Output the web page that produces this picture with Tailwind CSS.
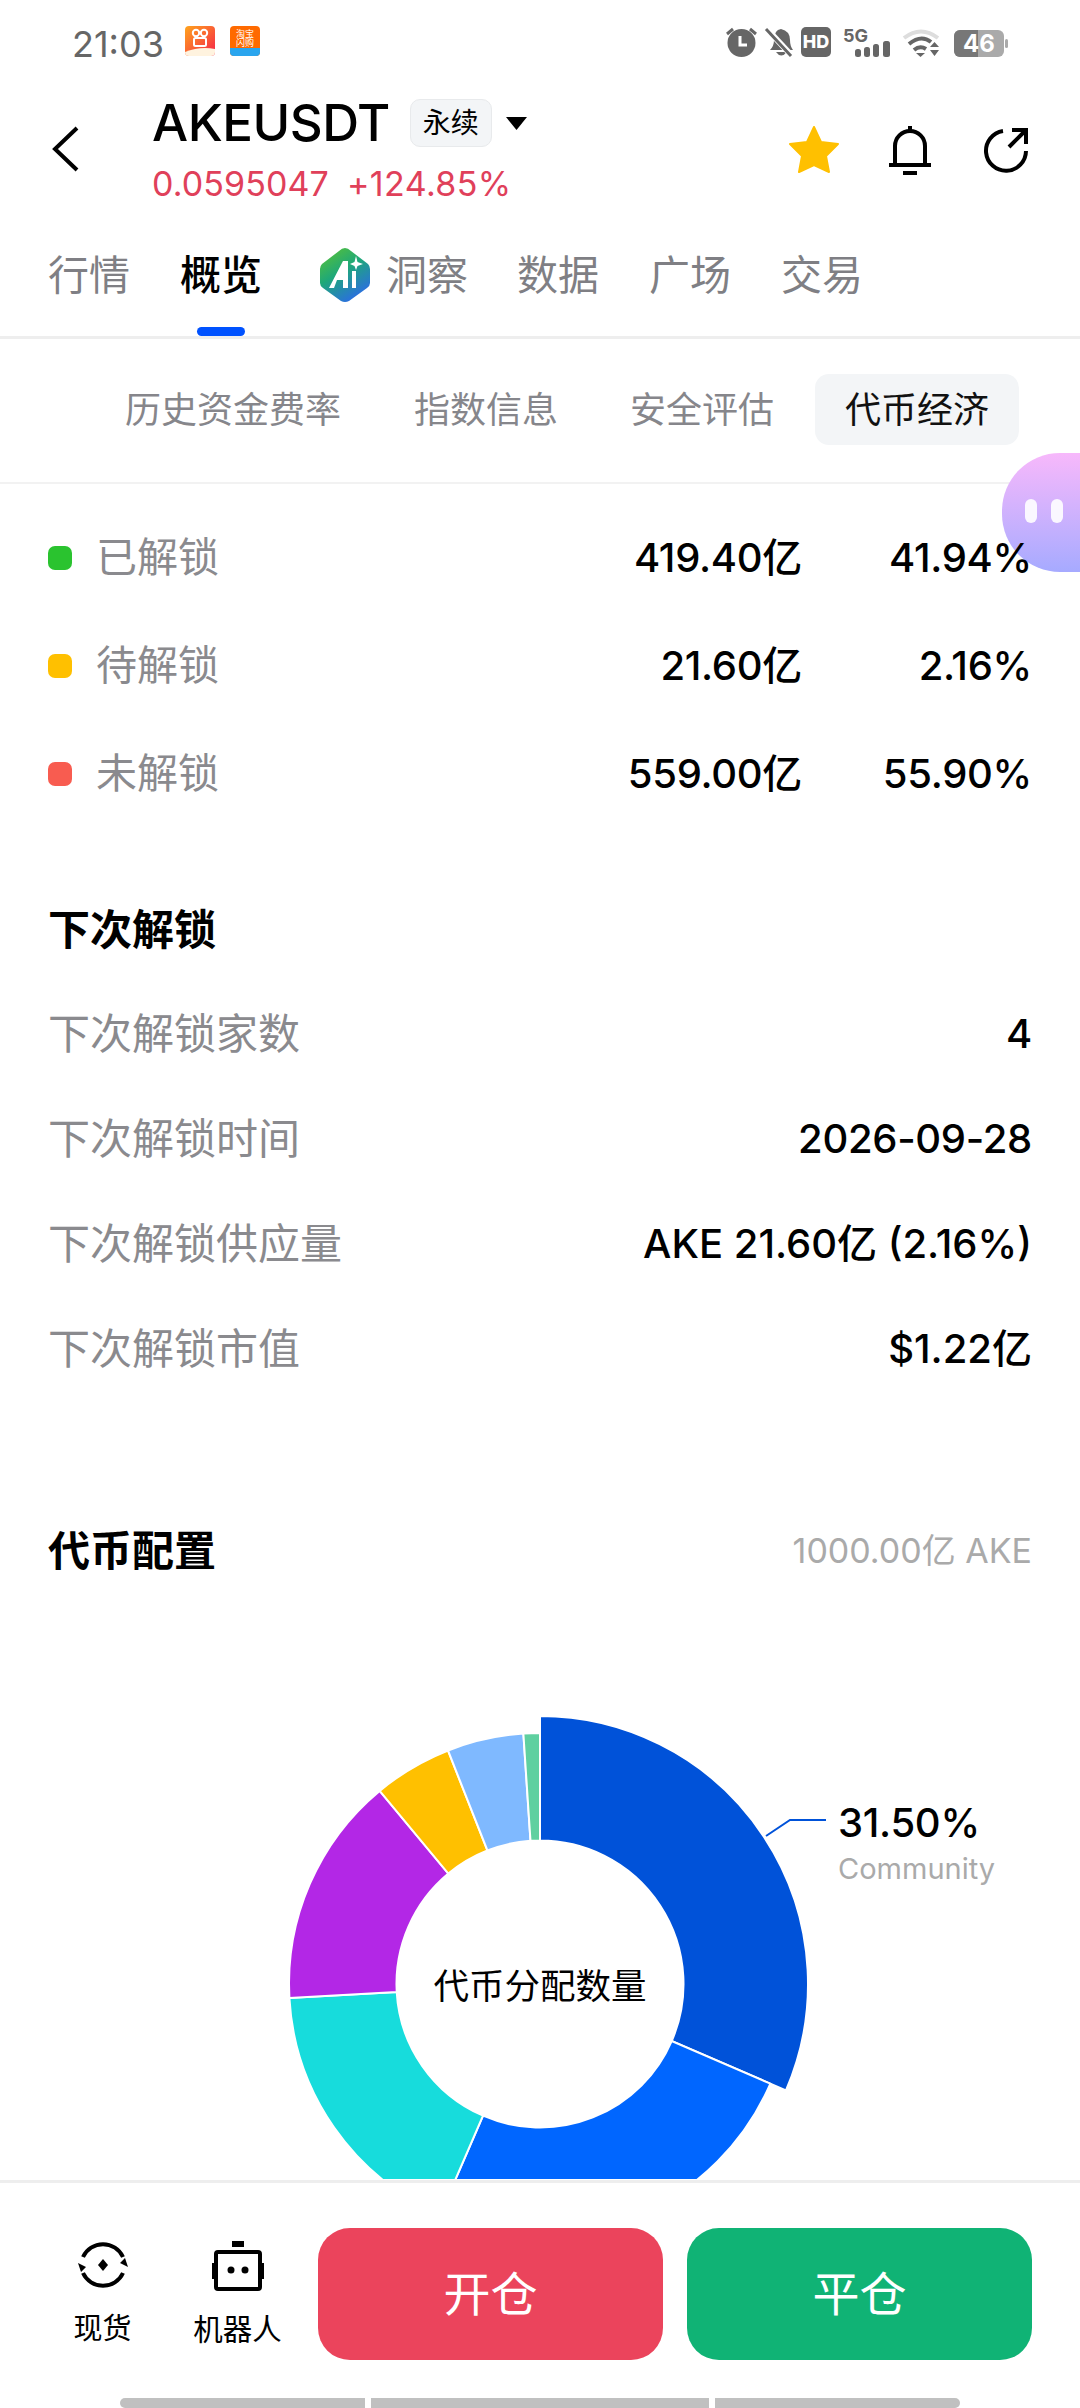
<!DOCTYPE html>
<html lang="zh-CN">
<head>
<meta charset="utf-8">
<title>AKEUSDT</title>
<script src="https://cdn.jsdelivr.net/npm/@tailwindcss/browser@4"></script>
</head>
<body class="bg-white">
<div class="relative w-[1080px] h-[2408px] overflow-hidden flex flex-col bg-white text-black font-['Inter','Noto_Sans_CJK_SC',sans-serif]">

  <!-- status bar -->
  <div class="h-[76px] flex items-start pl-[72px] pr-[60px] shrink-0">
    <span class="mt-[22px] text-[36px] leading-[44px] text-[#666]">21:03</span>
    <svg class="ml-[21px] mt-[26px]" width="88" height="32" viewBox="0 0 88 32">
      <defs>
        <linearGradient id="ks" x1="0" y1="0" x2="1" y2="1"><stop offset="0" stop-color="#ffa41c"/><stop offset="1" stop-color="#f5224a"/></linearGradient>
      </defs>
      <rect x="0" y="0" width="30" height="30" rx="4" fill="url(#ks)"/>
      <path d="M0 26 Q15 20 30 23 V26 a4 4 0 0 1 -4 4 H4 a4 4 0 0 1 -4 -4Z" fill="#fff3df"/>
      <circle cx="11" cy="7" r="3.2" fill="none" stroke="#fff" stroke-width="2"/>
      <circle cx="19" cy="7" r="3.2" fill="none" stroke="#fff" stroke-width="2"/>
      <rect x="9" y="12" width="12" height="8" rx="1.5" fill="none" stroke="#fff" stroke-width="2"/>
      <rect x="45" y="0" width="30" height="30" rx="4" fill="#ff6a00"/>
      <path d="M45 22 H75 V26 a4 4 0 0 1 -4 4 H49 a4 4 0 0 1 -4 -4Z" fill="#2aa5ee"/>
      <text x="60" y="11" text-anchor="middle" font-size="9" fill="#fff">淘宝</text>
      <text x="60" y="20" text-anchor="middle" font-size="9" fill="#fff">闪购</text>
    </svg>
    <svg class="ml-auto mt-[20px]" width="300" height="45" viewBox="720 20 300 45">
      <circle cx="741.500" cy="43" r="14" fill="#666"/>
      <path d="M740 36 V45 H747" fill="none" stroke="#fff" stroke-width="3"/>
      <path d="M727 34 L733 29 M750 29 L756 34" stroke="#666" stroke-width="3"/>
      <path d="M770 50 Q774 46 774 40 Q774 30 781 29 Q790 31 790 40 Q790 46 793 50 Z M776 52 Q781 59 787 52 Z" fill="#666"/>
      <path d="M766 28 L792 56" stroke="#fff" stroke-width="6"/>
      <path d="M766 29 L791 56" stroke="#666" stroke-width="3"/>
      <rect x="801" y="27" width="30" height="30" rx="5" fill="#666"/>
      <text x="816" y="48" text-anchor="middle" font-size="18" font-weight="800" fill="#fff">HD</text>
      <text x="843" y="42" font-size="18" font-weight="700" fill="#666">5G</text>
      <rect x="855" y="49" width="6" height="8" rx="2.500" fill="#666"/>
      <rect x="864" y="47" width="6" height="10" rx="2.500" fill="#666"/>
      <rect x="873" y="44" width="6" height="13" rx="2.500" fill="#666"/>
      <rect x="883" y="41" width="7" height="16" rx="2.500" fill="#666"/>
      <path d="M904 38 Q921 25 938 38" fill="none" stroke="#ddd" stroke-width="4"/>
      <path d="M909 44 Q921 34 931 42" fill="none" stroke="#666" stroke-width="4"/>
      <path d="M914 50 Q920 45 926 49" fill="none" stroke="#666" stroke-width="4"/>
      <path d="M916 53 H925 L920.500 57Z M930 47 L934.500 42 L939 47Z M930 50 H939 L934.500 56Z" fill="#666"/>
      <rect x="954" y="30" width="50" height="27" rx="6" fill="#aaa"/>
      <path d="M960 30 H978 V57 H960 a6 6 0 0 1 -6 -6 V36 a6 6 0 0 1 6 -6Z" fill="#777"/>
      <rect x="1005" y="39" width="3" height="9" rx="1.500" fill="#aaa"/>
      <text x="979" y="52" text-anchor="middle" font-size="24" font-weight="700" fill="#fff">46</text>
    </svg>
  </div>

  <!-- header -->
  <div class="h-[156px] flex items-start pl-[52px] pr-[50px] shrink-0">
    <svg class="mt-[50px]" width="28" height="46" viewBox="0 0 28 46"><path d="M25 2 L3 23 L25 44" fill="none" stroke="#000" stroke-width="4"/></svg>
    <div class="ml-[72px] flex flex-col">
      <div class="flex items-center h-[58px] mt-[18px]">
        <span class="text-[51px] leading-[58px] font-medium tracking-[-0.5px]">AKEUSDT</span>
        <span class="ml-[20px] w-[82px] h-[48px] flex items-center justify-center rounded-[10px] bg-[#f3f5f7] border border-[#e8eaec] text-[28px]">永续</span>
        <svg class="ml-[14px]" width="21" height="13" viewBox="0 0 21 13"><path d="M0 0 H21 L10.500 13Z" fill="#000"/></svg>
      </div>
      <div class="flex mt-[12px] text-[34px] leading-[40px] text-[#e0405a]">
        <span class="tracking-[0.1px]">0.0595047</span>
        <span class="ml-[18px] tracking-[0.4px]">+124.85%</span>
      </div>
    </div>
    <div class="ml-auto flex items-center mt-[49px]">
      <svg width="50" height="48" viewBox="0 0 50 48"><path d="M25 1 L32 16 L49 18 L37 30 L40 46 L25 39 L10 46 L13 30 L1 18 L18 16Z" fill="#ffc000" stroke="#ffc000" stroke-width="2" stroke-linejoin="round"/></svg>
      <svg class="ml-[49px]" width="44" height="50" viewBox="0 0 44 50">
        <path d="M22 1 V6" stroke="#000" stroke-width="4"/>
        <path d="M7 40 V21 A15 15 0 0 1 37 21 V40" fill="none" stroke="#000" stroke-width="4"/>
        <path d="M1 40 H43" stroke="#000" stroke-width="4"/>
        <path d="M15 48 H29" stroke="#000" stroke-width="4"/>
      </svg>
      <svg class="ml-[52px] -translate-x-[1px]" width="46" height="46" viewBox="0 0 46 46">
        <path d="M20 4 A20 20 0 1 0 43 24" fill="none" stroke="#000" stroke-width="4"/>
        <path d="M26 20 L42 4 M29 3 H43 V17" fill="none" stroke="#000" stroke-width="4"/>
      </svg>
    </div>
  </div>

  <!-- main tabs -->
  <div class="h-[107px] flex items-start pl-[48px] pt-[20px] border-b-[3px] border-[#eeeeee] shrink-0 text-[41px] leading-[46px] text-[#7f7f84]">
    <span>行情</span>
    <div class="ml-[50px] flex flex-col">
      <span class="text-black font-medium">概览</span>
      <span class="mt-[29px] self-center h-[9px] w-[48px] rounded-full bg-[#0052ff]"></span>
    </div>
    <div class="ml-[57px] flex items-center gap-[15px] h-[46px]">
      <svg width="52" height="56" viewBox="0 0 52 56">
        <defs>
          <linearGradient id="aiHex" x1="0" y1="0" x2="0.6" y2="1"><stop offset="0" stop-color="#5fc52e"/><stop offset="0.5" stop-color="#1fa878"/><stop offset="1" stop-color="#2a6fe0"/></linearGradient>
        </defs>
        <path d="M26 1 Q29 1 32 4 L49 17 Q51 19 51 22 V36 Q51 39 48 41 L30 54 Q26 56 22 54 L4 41 Q1 39 1 36 V22 Q1 19 3 17 L20 4 Q23 1 26 1Z" fill="url(#aiHex)"/>
        <path d="M10 41 L24 14 L29 14 L29 41 L24 41 L24 33 L18 33 L15 41Z" fill="#fff"/>
        <rect x="33" y="24" width="4" height="17" fill="#fff"/>
        <path d="M37 9 L38.500 15 L44 17 L38.500 19 L37 23 L35.500 19 L31 17 L35.500 15Z" fill="#fff"/>
      </svg>
      <span>洞察</span>
    </div>
    <span class="ml-[49px]">数据</span>
    <span class="ml-[50px]">广场</span>
    <span class="ml-[50px]">交易</span>
  </div>

  <!-- sub tabs -->
  <div class="h-[145px] flex items-start justify-end pt-[35px] pr-[61px] border-b-2 border-[#f2f2f2] shrink-0 text-[36px] text-[#86868b]">
    <span class="h-[71px] px-[30px] pt-[1px] flex items-center">历史资金费率</span>
    <span class="ml-[13px] h-[71px] px-[30px] pt-[1px] flex items-center">指数信息</span>
    <span class="ml-[12px] h-[71px] px-[30px] pt-[1px] flex items-center">安全评估</span>
    <span class="ml-[11px] h-[71px] px-[30px] pt-[1px] flex items-center rounded-[14px] bg-[#f3f5f7] text-[#111]">代币经济</span>
  </div>

  <main class="flex-1 overflow-hidden px-[48px]">
    <!-- unlock summary -->
    <div class="pt-[20px]">
      <div class="h-[108px] flex items-center">
        <span class="w-[24px] h-[24px] rounded-[7px] bg-[#2ac32f]"></span>
        <span class="ml-[24px] text-[41px] text-[#8a8a8e]">已解锁</span>
        <span class="relative z-10 ml-auto text-[40px] font-medium tracking-[-0.3px]">419.40亿</span>
        <span class="relative z-10 w-[230px] text-right text-[40px] font-medium tracking-[-0.3px]">41.94%</span>
      </div>
      <div class="h-[108px] flex items-center">
        <span class="w-[24px] h-[24px] rounded-[7px] bg-[#ffc000]"></span>
        <span class="ml-[24px] text-[41px] text-[#8a8a8e]">待解锁</span>
        <span class="ml-auto text-[40px] font-medium tracking-[-0.3px]">21.60亿</span>
        <span class="w-[230px] text-right text-[40px] font-medium tracking-[-0.3px]">2.16%</span>
      </div>
      <div class="h-[108px] flex items-center">
        <span class="w-[24px] h-[24px] rounded-[7px] bg-[#f85c50]"></span>
        <span class="ml-[24px] text-[41px] text-[#8a8a8e]">未解锁</span>
        <span class="ml-auto text-[40px] font-medium tracking-[-0.3px]">559.00亿</span>
        <span class="w-[230px] text-right text-[40px] font-medium tracking-[-0.3px]">55.90%</span>
      </div>
    </div>

    <!-- next unlock -->
    <div class="mt-[50px] h-[103px] flex items-center text-[42px] font-bold">下次解锁</div>
    <div class="h-[105px] flex items-center justify-between">
      <span class="text-[42px] text-[#8a8a8e]">下次解锁家数</span><span class="text-[40px] font-medium tracking-[-0.3px]">4</span>
    </div>
    <div class="h-[105px] flex items-center justify-between">
      <span class="text-[42px] text-[#8a8a8e]">下次解锁时间</span><span class="text-[40px] font-medium tracking-[-0.3px]">2026-09-28</span>
    </div>
    <div class="h-[105px] flex items-center justify-between">
      <span class="text-[42px] text-[#8a8a8e]">下次解锁供应量</span><span class="text-[40px] font-medium">AKE 21.60亿 (2.16%)</span>
    </div>
    <div class="h-[105px] flex items-center justify-between">
      <span class="text-[42px] text-[#8a8a8e]">下次解锁市值</span><span class="text-[40px] font-medium">$1.22亿</span>
    </div>

    <!-- allocation -->
    <div class="mt-[99px] h-[100px] flex items-center justify-between">
      <span class="text-[42px] font-bold">代币配置</span>
      <span class="text-[34px] text-[#aaaaaa]">1000.00亿 AKE</span>
    </div>
    <svg id="donut" class="-ml-[48px] block" width="1080" height="579" viewBox="0 1601 1080 579">
      <path d="M766 1837 L790 1821 H826" fill="none" stroke="#0052d9" stroke-width="2"/>
      <text x="838" y="1838" font-size="40" font-weight="500" letter-spacing="-0.3" fill="#000">31.50%</text>
      <text x="838" y="1880" font-size="29" fill="#aaaaaa">Community</text>
      <text x="540" y="2000" text-anchor="middle" font-size="35.500" fill="#000">代币分配数量</text>
    </svg>
  </main>

  <!-- bottom bar -->
  <div class="h-[228px] shrink-0 border-t-[3px] border-[#eeeeee] bg-white pt-[45px]">
    <div class="flex items-start pl-[74px]">
      <div class="w-[57px] flex flex-col items-center pt-[11px]">
        <svg width="52" height="52" viewBox="0 0 52 52">
          <path d="M6 18 A22 22 0 0 1 46 18 M46 34 A22 22 0 0 1 6 34" fill="none" stroke="#000" stroke-width="4"/>
          <path d="M1 24 L9 28 L4 33 Z M51 28 L43 24 L48 19Z" fill="#000"/>
          <path d="M26 20 L31 26 L26 32 L21 26Z" fill="#000"/>
        </svg>
        <span class="mt-[20px] text-[29px] leading-[36px] whitespace-nowrap">现货</span>
      </div>
      <div class="ml-[62px] w-[89px] flex flex-col items-center pt-[13px]">
        <svg width="52" height="50" viewBox="0 0 52 50">
          <rect x="20" y="0" width="12" height="6" fill="#000"/>
          <rect x="4" y="11" width="44" height="37" rx="2" fill="none" stroke="#000" stroke-width="4"/>
          <rect x="0" y="22" width="3" height="16" fill="#000"/>
          <rect x="49" y="22" width="3" height="16" fill="#000"/>
          <circle cx="19" cy="29" r="3.500" fill="#000"/>
          <circle cx="33" cy="29" r="3.500" fill="#000"/>
        </svg>
        <span class="mt-[20px] text-[29.500px] leading-[36px] whitespace-nowrap">机器人</span>
      </div>
      <button class="ml-[36px] w-[345px] h-[132px] rounded-[32px] bg-[#eb445c] text-white text-[47px]">开仓</button>
      <button class="ml-[24px] w-[345px] h-[132px] rounded-[32px] bg-[#10b375] text-white text-[47px]">平仓</button>
    </div>
    <div class="mt-[38px] flex justify-center gap-[6px]">
      <span class="w-[245px] h-[10px] rounded-l-full bg-[#c0c0c0]"></span>
      <span class="w-[338px] h-[10px] bg-[#c0c0c0]"></span>
      <span class="w-[245px] h-[10px] rounded-r-full bg-[#c0c0c0]"></span>
    </div>
  </div>

  <!-- floating assistant -->
  <div class="absolute left-[1002px] top-[453px] w-[120px] h-[119px] rounded-l-[58px] bg-gradient-to-b from-[#f7b8fb] to-[#a6aaff] flex gap-[14px] pt-[46px] pl-[23px]">
    <span class="w-[12px] h-[24px] rounded-full bg-white/90"></span>
    <span class="w-[12px] h-[24px] rounded-full bg-white/90"></span>
  </div>
</div>

<script>
  // Function to draw the allocation donut
  const segments = [
    { from: 0, to: 113.4, color: "#0052d9", outer: 268 },
    { from: 113.4, to: 203.4, color: "#0066ff", outer: 251 },
    { from: 203.4, to: 266.8, color: "#17dcdc", outer: 251 },
    { from: 266.8, to: 320.3, color: "#b327e6", outer: 251 },
    { from: 320.3, to: 338.5, color: "#ffc000", outer: 251 },
    { from: 338.5, to: 356.2, color: "#7fb9ff", outer: 251 },
    { from: 356.2, to: 360, color: "#5fd0a0", outer: 251 }
  ];
  const cx = 540, cy = 1985, inner = 143.5;
  const pt = (r, deg) => {
    const a = deg * Math.PI / 180;
    return (cx + r * Math.sin(a)).toFixed(2) + " " + (cy - r * Math.cos(a)).toFixed(2);
  };
  const donut = document.getElementById("donut");
  segments.slice().reverse().forEach(s => {
    const large = s.to - s.from > 180 ? 1 : 0;
    const p = document.createElementNS("http://www.w3.org/2000/svg", "path");
    p.setAttribute("d", `M${pt(s.outer, s.from)} A${s.outer} ${s.outer} 0 ${large} 1 ${pt(s.outer, s.to)} L${pt(inner, s.to)} A${inner} ${inner} 0 ${large} 0 ${pt(inner, s.from)}Z`);
    p.setAttribute("fill", s.color);
    p.setAttribute("stroke", "#fff");
    p.setAttribute("stroke-width", "2");
    donut.insertBefore(p, donut.firstChild);
  });
</script>
</body>
</html>
